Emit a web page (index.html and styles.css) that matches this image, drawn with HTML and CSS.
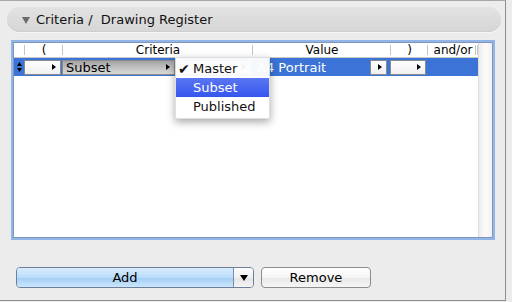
FILE: index.html
```html
<!DOCTYPE html>
<html lang="en">
<head>
    <meta charset="UTF-8">
    <title>Criteria</title>
    <link rel="stylesheet" href="styles.css">
</head>
<body>

<div class="panel">
    <div class="group-bar">
        <svg class="disclosure" width="8" height="7" viewBox="0 0 8 7"><path d="M0 0 H8 L4 7 Z" fill="#6a6a6a"/></svg>
        <span class="group-title">Criteria /&nbsp; Drawing Register</span>
    </div>

    <div class="table-box">
        <div class="table">
            <div class="table-head">
                <div class="head-cell c-step"></div>
                <div class="head-cell c-open">(</div>
                <div class="head-cell c-crit">Criteria</div>
                <div class="head-cell c-val">Value</div>
                <div class="head-cell c-close">)</div>
                <div class="head-cell c-andor">and/or</div>
            </div>

            <div class="row selected">
                <div class="stepper">
                    <svg width="5" height="10" viewBox="0 0 5 10"><path d="M2.5 0 L5 4 H0 Z M2.5 10 L5 6 H0 Z" fill="#000"/></svg>
                </div>
                <div class="popup light pop-open"><span class="arrow"></span></div>
                <div class="popup grey pop-field"><span class="popup-text">Subset</span><span class="arrow"></span></div>
                <div class="popup grey pop-type"><span class="arrow"></span></div>
                <div class="value-text">A4 Portrait</div>
                <div class="popup light pop-value"><span class="arrow"></span></div>
                <div class="popup light pop-close"><span class="arrow"></span></div>
            </div>
        </div>
        <div class="scroller"></div>

        <!-- open popup menu -->
        <div class="menu">
            <div class="menu-item"><span class="check">✔</span>Master</div>
            <div class="menu-item active">Subset</div>
            <div class="menu-item">Published</div>
        </div>
    </div>

    <div class="button-row">
        <div class="split-button">
            <button class="btn-main">Add</button>
            <button class="btn-drop">
                <svg width="8" height="6" viewBox="0 0 8 6"><path d="M0 0 H8 L4 6 Z" fill="#000"/></svg>
            </button>
        </div>
        <button class="btn-remove">Remove</button>
    </div>
</div>

</body>
</html>
```

FILE: styles.css
```css
body {
    margin: 0;
    padding: 0;
    background-color: #ececec;
    font-family: 'DejaVu Sans', 'Liberation Sans', sans-serif;
    font-size: 13px;
    color: #000;
}

.panel {
    width: 505px;
    height: 293px;
    padding-top: 6px;
    border-top: 1px solid #a8a8a8;
    border-right: 1px solid #8e8e8e;
    border-bottom: 1px solid #8e8e8e;
    box-sizing: content-box;
}

/* Group header */
.group-bar {
    display: flex;
    align-items: center;
    margin-left: 7px;
    width: 494px;
    height: 25px;
    border-radius: 13px;
    background: linear-gradient(#e2e2e2, #d6d6d6);
    box-shadow: inset 0 -1px 0 #cfcfcf, 0 1px 0 #f6f6f6;
}

.disclosure {
    margin-left: 15px;
    margin-top: 1px;
}

.group-title {
    margin-left: 6px;
    color: #111;
}

/* Table */
.table-box {
    position: relative;
    display: flex;
    margin: 10px 0 0 13px;
    width: 480px;
    height: 196px;
    box-sizing: border-box;
    border: 1px solid #7f95bd;
    box-shadow: 0 0 0 2px #92b4e6;
    background-color: #fff;
}

.table {
    width: 464px;
}

.table-head {
    display: flex;
    height: 14px;
    border-bottom: 1px solid #c9c9c9;
    background-color: #fff;
}

.head-cell {
    font-size: 12px;
    line-height: 14px;
    text-align: center;
    white-space: nowrap;
    background: linear-gradient(#c4c4c4, #c4c4c4) right center / 1px 10px no-repeat;
}

.c-step { width: 11px; }
.c-open { width: 38px; }
.c-crit { width: 190px; }
.c-val { width: 138px; }
.c-close { width: 37px; }

.c-andor {
    width: 50px;
    background:
        linear-gradient(#c4c4c4, #c4c4c4) 47px center / 1px 10px no-repeat,
        linear-gradient(#c4c4c4, #c4c4c4) 49px center / 1px 10px no-repeat;
}

.row {
    display: flex;
    align-items: center;
    height: 18px;
}

.row.selected {
    background-color: #3b74d6;
}

.stepper {
    display: flex;
    justify-content: center;
    width: 10px;
    padding-left: 1px;
    box-sizing: border-box;
}

.popup {
    display: flex;
    align-items: center;
    height: 15px;
    box-sizing: border-box;
    border: 1px solid #8a8a8a;
}

.popup.light {
    background: linear-gradient(#ffffff, #efefef);
}

.popup.grey {
    background: linear-gradient(#a4a4a4, #c6c6c6 60%, #d8d8d8);
    border-color: #8c8c8c;
}

.popup-text {
    padding-left: 3px;
    line-height: 13px;
}

.arrow {
    width: 0;
    height: 0;
    margin-left: auto;
    margin-right: 4px;
    border-left: 4px solid #000;
    border-top: 3px solid transparent;
    border-bottom: 3px solid transparent;
}

.pop-open { width: 37px; }
.pop-field { width: 113px; margin-left: 1px; }
.pop-type { width: 75px; margin-left: 1px; }

.value-text {
    width: 113px;
    margin-left: 6px;
    color: #fff;
    white-space: nowrap;
}

.pop-value { width: 17px; }
.pop-close { width: 36px; margin-left: 3px; }

.scroller {
    width: 14px;
    border-left: 1px solid #dcdcdc;
    background: linear-gradient(to right, #ededed, #fbfbfb 50%, #f1f1f1);
}

/* Open popup menu */
.menu {
    position: absolute;
    left: 161px;
    top: 14px;
    width: 95px;
    padding: 1px 0 2px;
    background-color: rgba(255, 255, 255, 0.95);
    border: 1px solid rgba(0, 0, 0, 0.12);
    box-sizing: border-box;
    box-shadow: 0 3px 8px rgba(0, 0, 0, 0.35);
}

.menu-item {
    display: flex;
    align-items: center;
    height: 19px;
    padding-left: 17px;
    color: #111;
}

.menu-item .check {
    margin-left: -15px;
    width: 15px;
    font-size: 14px;
}

.menu-item.active {
    background: linear-gradient(#5a76f2, #3556ee);
    color: #fff;
}

/* Bottom buttons */
.button-row {
    display: flex;
    margin: 29px 0 0 16px;
}

.split-button {
    display: flex;
    width: 238px;
    height: 21px;
    border: 1px solid #6d7f9c;
    border-radius: 4px;
    box-sizing: border-box;
    overflow: hidden;
}

.split-button button,
.btn-remove {
    font-family: inherit;
    font-size: 13px;
    color: #000;
    padding: 0;
    margin: 0;
    border: none;
}

.btn-main {
    flex: 1;
    background: linear-gradient(#d8ecfd, #b9dcfa 50%, #a3cef6 52%, #cbe7fc);
    border-right: 1px solid #7a8ca8 !important;
}

.btn-drop {
    display: flex;
    align-items: center;
    justify-content: center;
    width: 19px;
    background: linear-gradient(#fcfcfc, #f0f0f0 50%, #e4e4e4 52%, #f4f4f4);
}

.btn-remove {
    width: 110px;
    height: 21px;
    margin-left: 7px !important;
    border: 1px solid #8c8c8c !important;
    border-radius: 4px;
    background: linear-gradient(#ffffff, #f4f4f4 50%, #e8e8e8 52%, #f6f6f6);
}
```
